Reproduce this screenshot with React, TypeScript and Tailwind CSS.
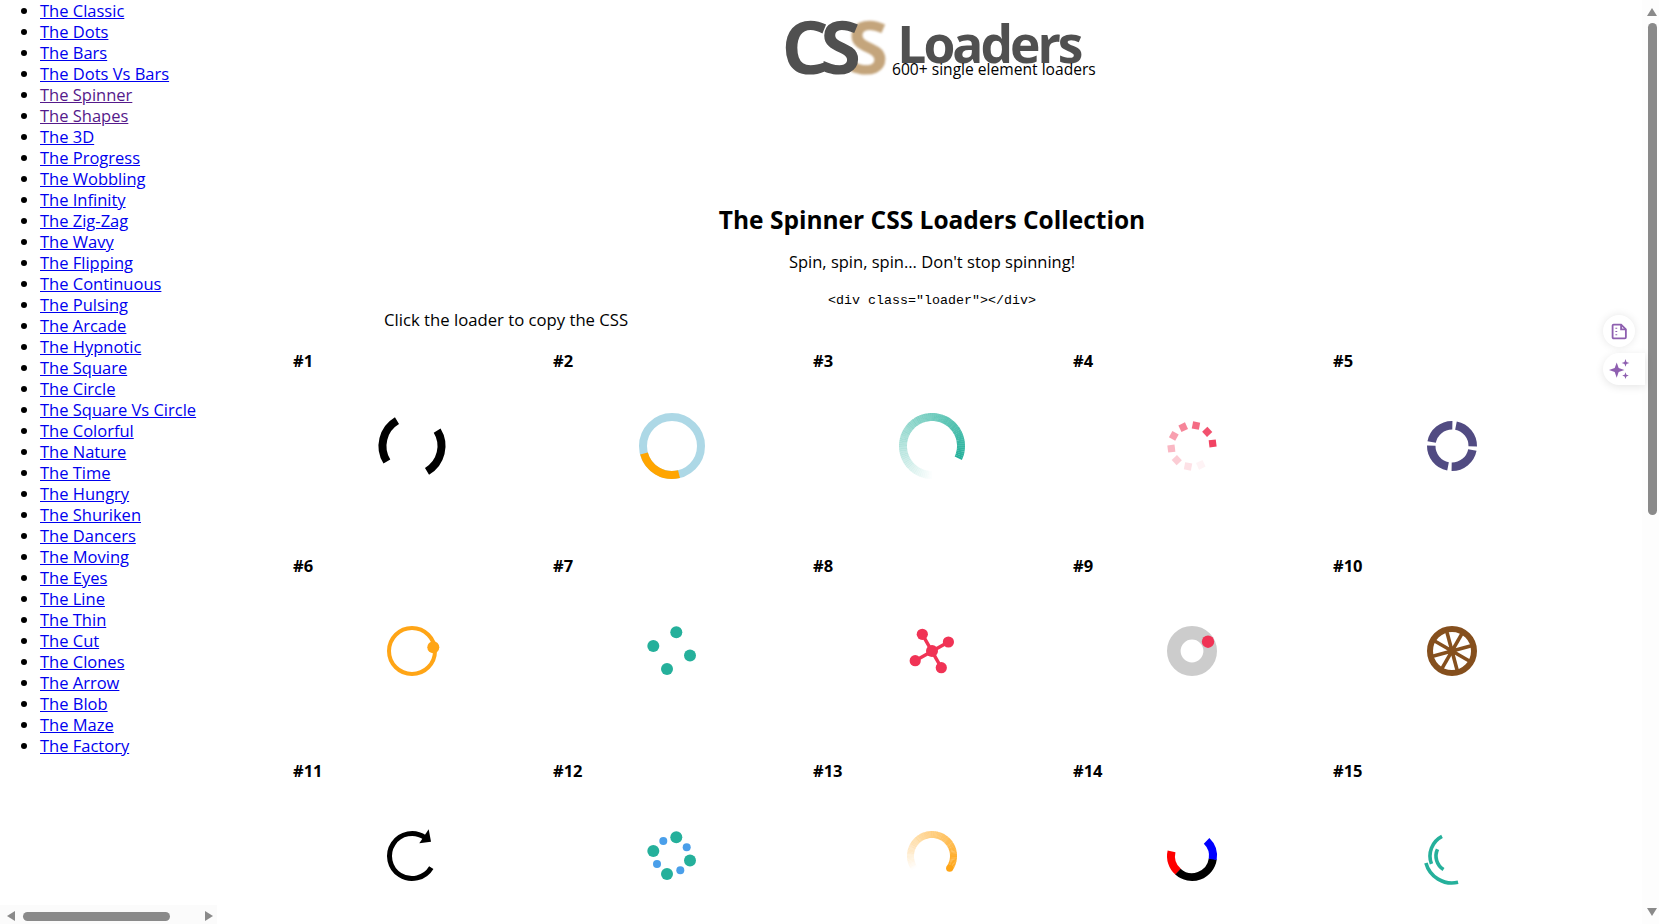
const links = [
  'The Classic', 'The Dots', 'The Bars', 'The Dots Vs Bars', 'The Spinner', 'The Shapes', 'The 3D', 'The Progress',
  'The Wobbling', 'The Infinity', 'The Zig-Zag', 'The Wavy', 'The Flipping', 'The Continuous', 'The Pulsing',
  'The Arcade', 'The Hypnotic', 'The Square', 'The Circle', 'The Square Vs Circle', 'The Colorful', 'The Nature',
  'The Time', 'The Hungry', 'The Shuriken', 'The Dancers', 'The Moving', 'The Eyes', 'The Line', 'The Thin', 'The Cut',
  'The Clones', 'The Arrow', 'The Blob', 'The Maze', 'The Factory',
];

const visited = ['The Spinner', 'The Shapes'];

// angles in degrees, clockwise on screen, 0 = east, centre of the svg is 0,0
function pt(r: number, a: number) {
  const t = (a * Math.PI) / 180;
  return `${(r * Math.cos(t)).toFixed(2)} ${(r * Math.sin(t)).toFixed(2)}`;
}

function arc(r: number, a0: number, a1: number) {
  const large = a1 - a0 > 180 ? 1 : 0;
  return `M${pt(r, a0)}A${r} ${r} 0 ${large} 1 ${pt(r, a1)}`;
}

function Arc({ r, from, to, w, color }: { r: number; from: number; to: number; w: number; color: string }) {
  return <path d={arc(r, from, to)} fill="none" stroke={color} strokeWidth={w} />;
}

// ring that is full colour at `start` and fades out going counter-clockwise over `span` degrees
function Fade({ r, start, span, w, color }: { r: number; start: number; span: number; w: number; color: string }) {
  const n = 80;
  const step = span / n;
  return (
    <g>
      {Array.from({ length: n }, (_, i) => (
        <path
          key={i}
          d={arc(r, start - (i + 1) * step - 0.4, start - i * step)}
          fill="none"
          stroke={color}
          strokeWidth={w}
          opacity={1 - i / n}
        />
      ))}
    </g>
  );
}

const teal = '#25b09b';
const red = '#f03355';
const orange = '#ffa516';
const blue = '#4a9fea';
const brown = '#854f1d';
const indigo = '#514b82';

const greenDots = [[4.3, -18.7], [-18.7, -5], [18, 4.5], [-5, 18]];
const blueDots = [[-8.7, -15], [14.7, -8.7], [-15, 8], [8.3, 14.3]];
const squares = [
  [-7, 0.92], [-43, 0.85], [-79, 0.72], [-115, 0.6], [-151, 0.47], [-187, 0.35], [-223, 0.25], [-259, 0.15], [-295, 0.06],
];

const loaders = [
  <>
    <Arc r={29.5} from={148.3} to={239.4} w={8} color="#000" />
    <Arc r={29.5} from={-31.6} to={59.4} w={8} color="#000" />
  </>,
  <>
    <circle r={29} fill="none" stroke="#add8e6" strokeWidth={8} />
    <Arc r={29} from={76} to={165} w={8} color="#ffa500" />
  </>,
  <Fade r={29} start={25} span={295} w={8} color={teal} />,
  <>
    {squares.map(([a, o]) => (
      <rect key={a} x={17.2} y={-3.6} width={7.2} height={7.2} fill={red} opacity={o} transform={`rotate(${a})`} />
    ))}
  </>,
  <>
    <Arc r={20.75} from={11} to={91} w={8.5} color={indigo} />
    <Arc r={20.75} from={101} to={181} w={8.5} color={indigo} />
    <Arc r={20.75} from={191} to={271} w={8.5} color={indigo} />
    <Arc r={20.75} from={281} to={361} w={8.5} color={indigo} />
  </>,
  <>
    <circle r={23} fill="none" stroke={orange} strokeWidth={4} />
    <circle cx={21.3} cy={-3.7} r={6} fill={orange} />
  </>,
  <>
    {greenDots.map(([x, y]) => (
      <circle key={x} cx={x} cy={y} r={6} fill={teal} />
    ))}
  </>,
  <>
    <path d="M-9.7 -16.7L9.3 16.7M16.4 -9L-16.8 9.7" stroke={red} strokeWidth={3.4} fill="none" />
    <circle r={6} fill={red} />
    <circle cx={-9.7} cy={-16.7} r={5.6} fill={red} />
    <circle cx={16.4} cy={-9} r={5.6} fill={red} />
    <circle cx={-16.8} cy={9.7} r={5.6} fill={red} />
    <circle cx={9.3} cy={16.7} r={5.6} fill={red} />
  </>,
  <>
    <circle r={18.2} fill="none" stroke="#cccccc" strokeWidth={13.6} />
    <circle cx={16} cy={-9.3} r={6.2} fill={red} />
  </>,
  <>
    <circle r={22} fill="none" stroke={brown} strokeWidth={6} />
    <circle r={4.5} fill={brown} />
    {[-15, 30, 75, 120].map((a) => (
      <line key={a} x1={-22} x2={22} stroke={brown} strokeWidth={3.6} transform={`rotate(${a})`} />
    ))}
  </>,
  <>
    <Arc r={22.5} from={-329} to={-55} w={5} color="#000" />
    <path d="M16.7 -26.7L19 -14.3L7.3 -12.7Z" fill="#000" />
  </>,
  <>
    {greenDots.map(([x, y]) => (
      <circle key={x} cx={x} cy={y} r={6} fill={teal} />
    ))}
    {blueDots.map(([x, y]) => (
      <circle key={x} cx={x} cy={y} r={4} fill={blue} />
    ))}
  </>,
  <>
    <Fade r={21.5} start={35} span={250} w={7} color={orange} />
    <circle cx={17.6} cy={12.3} r={3.5} fill={orange} />
  </>,
  <>
    <Arc r={21} from={131} to={193} w={8} color="#ff0000" />
    <Arc r={21} from={8} to={132} w={8} color="#000" />
    <Arc r={21} from={-46} to={9} w={8} color="#0000ff" />
  </>,
  <>
    <Arc r={27} from={77} to={165} w={3.6} color={teal} />
    <Arc r={22} from={159} to={243} w={3.6} color={teal} />
    <Arc r={16} from={122} to={205} w={3.6} color={teal} />
  </>,
];

function LoaderCell({ n, art }: { n: number; art: React.ReactNode }) {
  return (
    <div className="h-[205px] pl-[11px]">
      <div className="h-[21px] text-[16.5px] leading-[21px] font-bold text-black">#{n}</div>
      <div className="mt-[35px] flex justify-center pr-[11px]">
        <svg width="80" height="80" viewBox="-40 -40 80 80">
          {art}
        </svg>
      </div>
    </div>
  );
}

function HScrollbar() {
  return (
    <div className="flex h-[19px] w-[217px] items-center bg-[#fbfbfb] pt-[3px] pl-[7px]">
      <div className="h-0 w-0 border-y-[5px] border-r-[8px] border-y-transparent border-r-[#8a8a8a]" />
      <div className="ml-[8px] h-[9px] w-[147px] rounded-full bg-[#8a8a8a]" />
      <div className="ml-[35px] h-0 w-0 border-y-[5px] border-l-[8px] border-y-transparent border-l-[#8a8a8a]" />
    </div>
  );
}

function VScrollbar() {
  return (
    <div className="flex w-[17px] flex-col items-center bg-[#fdfdfd] pl-[3px]">
      <div className="mt-[8px] h-0 w-0 border-x-[5px] border-b-[8px] border-x-transparent border-b-[#8a8a8a]" />
      <div className="mt-[7px] h-[492px] w-[9px] rounded-full bg-[#8a8a8a]" />
      <div className="mt-auto mb-[8px] h-0 w-0 border-x-[5px] border-t-[8px] border-x-transparent border-t-[#8a8a8a]" />
    </div>
  );
}

function Logo() {
  return (
    <div className="relative flex h-[90px] justify-center pt-[2px] pr-[2px] font-['Open_Sans',sans-serif] text-[#505050]">
      <div className="flex items-start">
        <span className="relative z-10 text-[74px] leading-[88px] font-bold tracking-[-8.5px]">CS</span>
        <span className="ml-[-5px] text-[74px] leading-[88px] font-bold text-[#c4a57c] blur-[0.8px]">S</span>
        <span className="mt-[1px] ml-[9px] text-[51.5px] leading-[80px] font-bold tracking-[-3px]">Loaders</span>
      </div>
      <div className="absolute top-[59px] left-[670px] text-[15.6px] leading-[20px] text-black">600+ single element loaders</div>
    </div>
  );
}

export default function App() {
  return (
    <div className="relative flex h-screen w-full overflow-hidden bg-white font-['Open_Sans',sans-serif] text-black">
      <aside className="flex w-[222px] shrink-0 flex-col justify-between">
        <ul className="list-disc pl-[40px] text-[16.5px] leading-[21px]">
          {links.map((l) => (
            <li key={l}>
              <a href="#" className={visited.includes(l) ? 'text-[#551a8b] underline' : 'text-[#0000ee] underline'}>
                {l}
              </a>
            </li>
          ))}
        </ul>
        <HScrollbar />
      </aside>

      <main className="min-w-0 flex-1 overflow-hidden">
        <Logo />
        <h1 className="mt-[113px] text-center text-[24.5px] leading-[34px] font-bold">The Spinner CSS Loaders Collection</h1>
        <p className="mt-[13px] text-center text-[16.5px] leading-[24px]">Spin, spin, spin... Don't stop spinning!</p>
        <div className="mt-[17px] text-center font-['Liberation_Mono',monospace] text-[13.33px] leading-[20px]">
          {'<div class="loader"></div>'}
        </div>
        <p className="mx-auto mt-[-2px] w-[1300px] pl-[102px] text-[16.7px] leading-[21px]">Click the loader to copy the CSS</p>
        <div className="mx-auto mt-[20px] grid w-[1300px] grid-cols-5">
          {loaders.map((art, i) => (
            <LoaderCell key={i} n={i + 1} art={art} />
          ))}
        </div>
      </main>

      <VScrollbar />

      <div className="absolute top-[315px] left-[1603px] flex h-[32px] w-[32px] items-center justify-center rounded-full bg-white shadow-[0_0_8px_rgba(0,0,0,0.1)]">
        <svg width="17" height="17" viewBox="0 0 16 16" fill="none" stroke="#8e5fb0" strokeWidth="1.7">
          <path d="M1.5 2.5a1 1 0 0 1 1-1h7l4.5 4.5v7.5a1 1 0 0 1-1 1h-10.5a1 1 0 0 1-1-1z" />
          <path d="M5 4.5v1M5 7.5v1M5 10.5v1" />
          <path d="M9.5 1.5v4.5h4.5" />
        </svg>
      </div>
      <div className="absolute top-[353px] left-[1603px] flex h-[32px] w-[42px] items-center rounded-l-full bg-white pl-[6px] shadow-[0_2px_8px_rgba(0,0,0,0.1)]">
        <svg width="22" height="22" viewBox="0 0 20 20" fill="#8e5fb0">
          <path d="M7 4 L8.8 9.2 L14 11 L8.8 12.8 L7 18 L5.2 12.8 L0 11 L5.2 9.2 Z" />
          <path d="M15 1 L15.9 3.6 L18.5 4.5 L15.9 5.4 L15 8 L14.1 5.4 L11.5 4.5 L14.1 3.6 Z" />
          <path d="M15 13 L15.8 15.2 L18 16 L15.8 16.8 L15 19 L14.2 16.8 L12 16 L14.2 15.2 Z" />
        </svg>
      </div>
    </div>
  );
}
